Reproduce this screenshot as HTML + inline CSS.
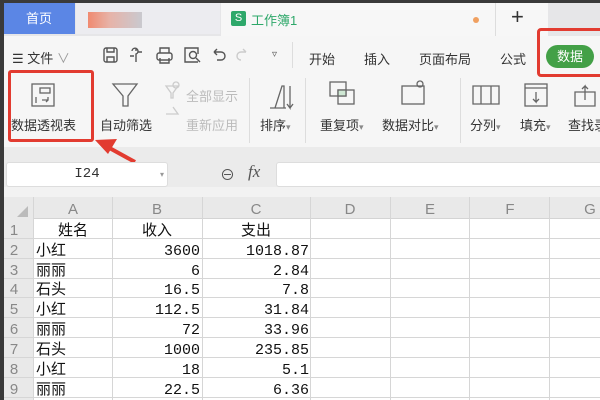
<!DOCTYPE html><html><head><meta charset="utf-8"><style>
body{margin:0;width:600px;height:400px;overflow:hidden;background:#fff;position:relative;font-family:"Liberation Sans","Noto Sans CJK SC",sans-serif;}
.a{position:absolute}
.t{font-size:12px;color:#333;white-space:nowrap}
.g{color:#bbb}
</style></head><body>
<div class="a" style="left:0;top:0;width:600px;height:36px;background:#e6e6e8"></div>
<div class="a" style="left:0;top:0;width:600px;height:3px;background:#3a3a3a"></div>
<div class="a" style="left:3px;top:3px;width:72px;height:31px;background:#5b86e5;color:#fff;font-size:13px;line-height:31px;text-align:center">首页</div>
<div class="a" style="left:76px;top:3px;width:144px;height:31px;background:#ececf0"></div>
<div class="a" style="left:88px;top:12px;width:54px;height:16px;background:linear-gradient(90deg,#f08a70,#e7b3a8 40%,#c9c9cf)"></div>
<div class="a" style="left:221px;top:3px;width:275px;height:33px;background:#f7f7f7"></div>
<div class="a" style="left:231px;top:11px;width:15px;height:15px;background:#2ea86a;color:#fff;font-size:11px;line-height:15px;text-align:center;border-radius:2px">S</div>
<div class="a" style="left:251px;top:10px;font-size:13px;color:#2ea86a">工作簿1</div>
<div class="a" style="left:473px;top:17px;width:6px;height:6px;border-radius:3px;background:#f0a060"></div>
<div class="a" style="left:495px;top:3px;width:52px;height:33px;background:#f7f7f7;border-left:1px solid #ddd"></div>
<div class="a" style="left:511px;top:4px;font-size:22px;color:#333">+</div>
<div class="a" style="left:0;top:36px;width:600px;height:112px;background:#f6f6f6"></div>
<div class="a" style="left:0;top:0;width:4px;height:400px;background:#3a3a3a"></div>
<div class="a t" style="left:12px;top:48px;font-size:13px">☰ 文件 <span style="color:#999">∨</span></div>
<svg class="a" style="left:100px;top:44px" width="155" height="24" fill="none" stroke="#555" stroke-width="1.4">
<rect x="4" y="4" width="13" height="14" rx="2"/><path d="M7 4v4h7V4M7 18v-5h7v5"/>
<path d="M32 7a3 3 0 1 1 4 3v8M30 12h4M38 8h4M36 4v3"/>
<rect x="57" y="9" width="15" height="7" rx="2"/><path d="M60 9V4h9v5M60 14v5h9v-5"/>
<path d="M98 18H85V4h13v6"/><circle cx="93" cy="11" r="3.5"/><path d="M96 14l4 4"/>
<path d="M114 8h7a4 4 0 0 1 0 8h-4M114 8l3-3M114 8l3 3"/>
<path d="M146 8h-5a4 4 0 0 0 0 8" stroke="#ccc"/><path d="M146 8l-3-3" stroke="#ccc"/>
</svg>
<div class="a" style="left:272px;top:49px;font-size:10px;color:#555">▿</div>
<div class="a" style="left:292px;top:42px;width:1px;height:26px;background:#ddd"></div>
<div class="a t" style="left:309px;top:49px;font-size:13px">开始</div>
<div class="a t" style="left:364px;top:49px;font-size:13px">插入</div>
<div class="a t" style="left:419px;top:49px;font-size:13px">页面布局</div>
<div class="a t" style="left:500px;top:49px;font-size:13px">公式</div>
<div class="a" style="left:546px;top:45px;width:48px;height:23px;border-radius:12px;background:#43a047;color:#fff;font-size:13px;line-height:23px;text-align:center">数据</div>
<div class="a" style="left:537px;top:28px;width:70px;height:49px;border:3px solid #e23b30;border-radius:4px;box-sizing:border-box"></div>
<svg class="a" style="left:0;top:72px" width="600" height="75" fill="none" stroke="#666" stroke-width="1.3">
<rect x="32" y="12" width="22" height="22"/><rect x="40" y="16" width="10" height="5"/><path d="M36 25v6M42 28h6v-3M46 30l2-2"/>
<path d="M113 12h24l-9 12v10h-5V24z"/>
<path d="M166 14h12l-5 7v5h-2v-5zM166 42h12l-5-7" stroke="#ccc"/><circle cx="176" cy="13" r="3" stroke="#ccc"/>
<path d="M275 36l7-22h2v22zM270 36h16M290 14v22l-3-4M290 36l3-4"/>
<rect x="330" y="10" width="16" height="14"/><rect x="338" y="18" width="16" height="14"/><rect x="338" y="18" width="8" height="6" fill="#cfe8d4"/>
<rect x="402" y="14" width="22" height="18"/><circle cx="420" cy="12" r="3"/>
<path d="M473 14h26v18h-26zM481 14v18M491 14v18"/>
<rect x="525" y="12" width="22" height="22"/><path d="M525 16h22M536 20v10l-3-3M536 30l3-3"/>
<path d="M575 20h20v14h-20zM585 28v-14l-3 3M585 14l3 3"/>
</svg>
<div class="a t" style="left:11px;top:115px;font-size:13px">数据透视表</div>
<div class="a" style="left:8px;top:70px;width:86px;height:72px;border:3px solid #e23b30;border-radius:3px;box-sizing:border-box"></div>
<div class="a t" style="left:100px;top:115px;font-size:13px">自动筛选</div>
<div class="a t g" style="left:186px;top:86px;font-size:13px">全部显示</div>
<div class="a t g" style="left:186px;top:115px;font-size:13px">重新应用</div>
<div class="a" style="left:249px;top:78px;width:1px;height:65px;background:#ddd"></div>
<div class="a t" style="left:260px;top:115px;font-size:13px">排序<span style="font-size:9px;color:#888">▾</span></div>
<div class="a" style="left:305px;top:78px;width:1px;height:65px;background:#ddd"></div>
<div class="a t" style="left:320px;top:115px;font-size:13px">重复项<span style="font-size:9px;color:#888">▾</span></div>
<div class="a t" style="left:382px;top:115px;font-size:13px">数据对比<span style="font-size:9px;color:#888">▾</span></div>
<div class="a" style="left:460px;top:78px;width:1px;height:65px;background:#ddd"></div>
<div class="a t" style="left:470px;top:115px;font-size:13px">分列<span style="font-size:9px;color:#888">▾</span></div>
<div class="a t" style="left:520px;top:115px;font-size:13px">填充<span style="font-size:9px;color:#888">▾</span></div>
<div class="a t" style="left:568px;top:115px;font-size:13px">查找录</div>
<div class="a" style="left:4px;top:147px;width:596px;height:40px;background:#ebebeb"></div>
<svg class="a" style="left:90px;top:130px" width="60" height="40"><path d="M45 32L14 15" stroke="#e23b30" stroke-width="4"/><path d="M5 10l22-1-9 15z" fill="#e23b30"/></svg>
<div class="a" style="left:6px;top:162px;width:162px;height:25px;background:#fff;border:1px solid #ddd;border-radius:3px;box-sizing:border-box;font-family:'Liberation Mono',monospace;font-size:14px;line-height:23px;text-align:center;color:#333">I24</div>
<div class="a" style="left:160px;top:170px;font-size:8px;color:#999">▾</div>
<div class="a" style="left:220px;top:164px;font-size:15px;color:#555">⊖</div>
<div class="a" style="left:248px;top:162px;font-size:17px;color:#555;font-style:italic;font-family:'Liberation Serif',serif">fx</div>
<div class="a" style="left:276px;top:162px;width:330px;height:25px;background:#fff;border:1px solid #ddd;border-radius:3px;box-sizing:border-box"></div>
<div class="a" style="left:4px;top:187px;width:596px;height:10px;background:#f2f2f2"></div>
<div class="a" style="left:4px;top:197px;width:596px;height:21px;background:#e9e9e9;border-bottom:1px solid #d4d4d4"></div>
<div class="a" style="left:4px;top:218px;width:29px;height:182px;background:#e9e9e9"></div>
<svg class="a" style="left:0;top:197px" width="600" height="203">
<path d="M28 9v11h-11z" fill="#bbb"/>
<g stroke="#d6d6d6"><path d="M33.5 0v203M112.5 0v203M202.5 0v203M310.5 0v203M390.5 0v203M469.5 0v203M549.5 0v203"/>
<path d="M4 41.5h596M4 61.5h596M4 81.5h596M4 100.5h596M4 120.5h596M4 140.5h596M4 160.5h596M4 180.5h596M4 200.5h596"/></g>
<g fill="#888" font-family="Liberation Sans" font-size="15" text-anchor="middle">
<text x="73" y="17">A</text><text x="157" y="17">B</text><text x="256" y="17">C</text><text x="350" y="17">D</text><text x="430" y="17">E</text><text x="510" y="17">F</text><text x="590" y="17">G</text>
<text x="14" y="38">1</text><text x="14" y="58">2</text><text x="14" y="78">3</text><text x="14" y="97">4</text><text x="14" y="117">5</text><text x="14" y="137">6</text><text x="14" y="157">7</text><text x="14" y="177">8</text><text x="14" y="197">9</text></g>
<g fill="#111" font-family="Liberation Mono,Noto Sans CJK SC,monospace" font-size="15">
<g text-anchor="middle"><text x="73" y="38">姓名</text><text x="157" y="38">收入</text><text x="256" y="38">支出</text></g>
<text x="36" y="58">小红</text><text x="36" y="78">丽丽</text><text x="36" y="97">石头</text><text x="36" y="117">小红</text><text x="36" y="137">丽丽</text><text x="36" y="157">石头</text><text x="36" y="177">小红</text><text x="36" y="197">丽丽</text>
<g text-anchor="end"><text x="200" y="58">3600</text><text x="200" y="78">6</text><text x="200" y="97">16.5</text><text x="200" y="117">112.5</text><text x="200" y="137">72</text><text x="200" y="157">1000</text><text x="200" y="177">18</text><text x="200" y="197">22.5</text>
<text x="309" y="58">1018.87</text><text x="309" y="78">2.84</text><text x="309" y="97">7.8</text><text x="309" y="117">31.84</text><text x="309" y="137">33.96</text><text x="309" y="157">235.85</text><text x="309" y="177">5.1</text><text x="309" y="197">6.36</text></g></g>
</svg>
</body></html>
